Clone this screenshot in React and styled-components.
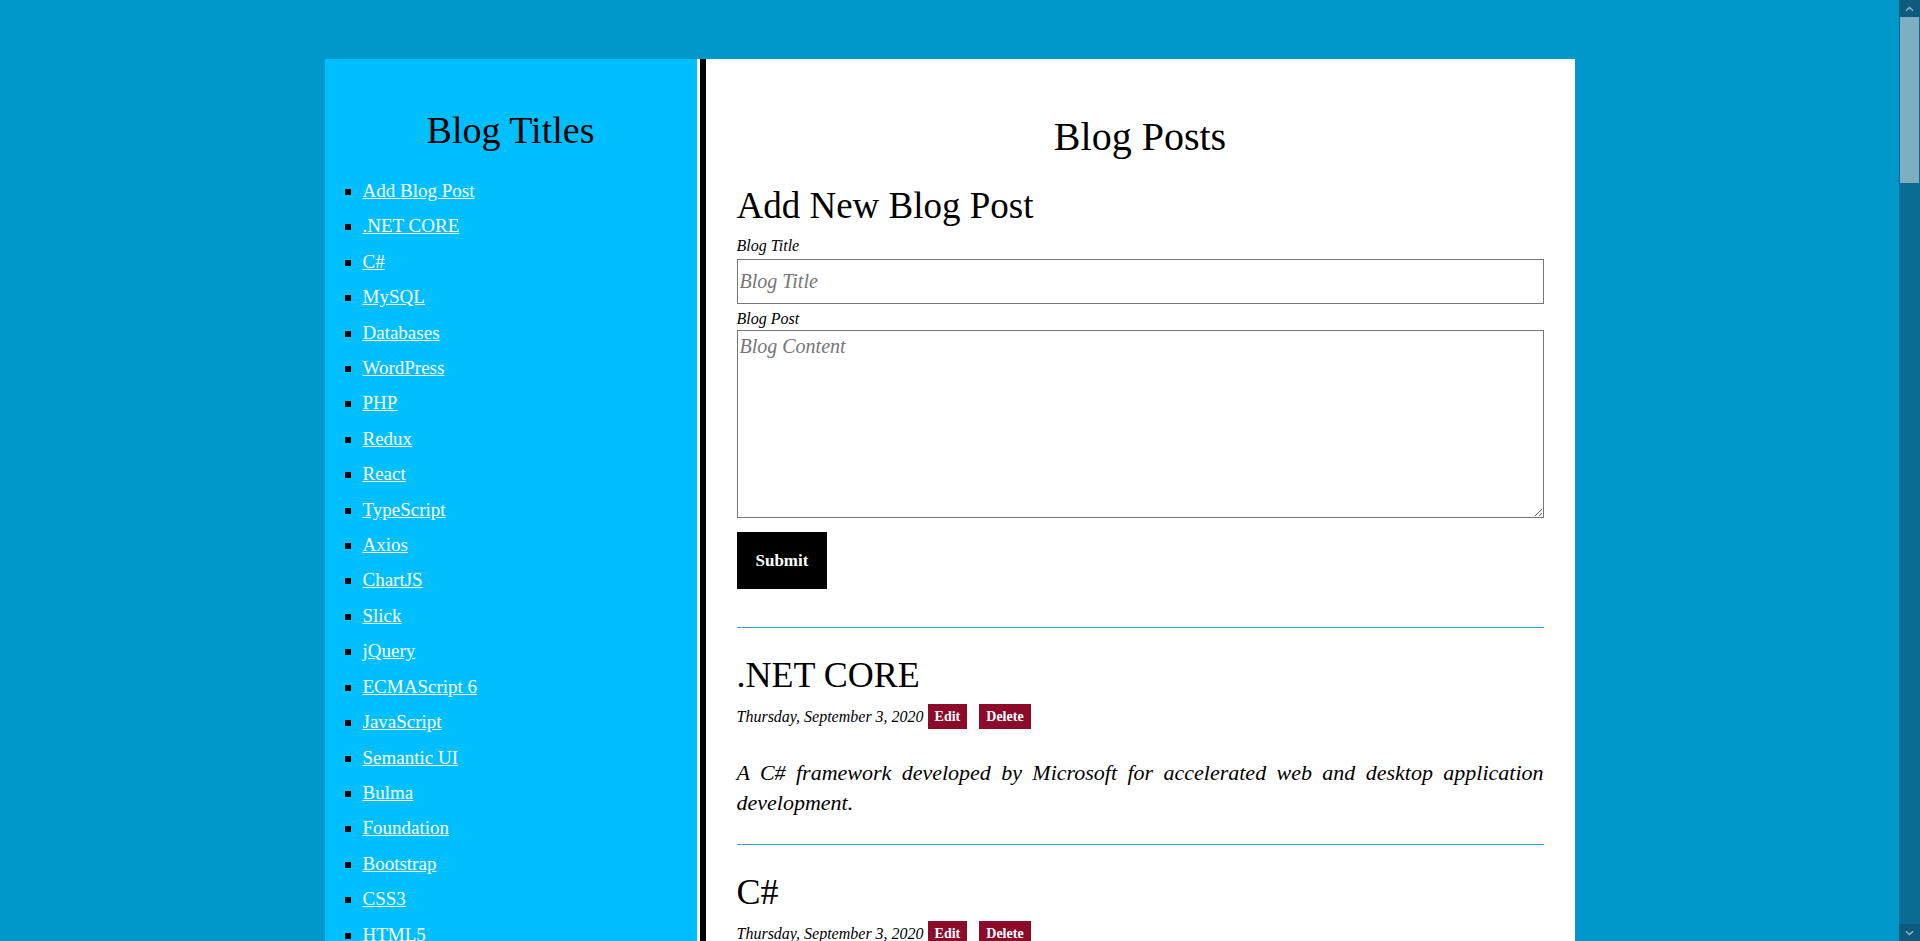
import React from 'react';
import styled, { createGlobalStyle } from 'styled-components';

const GlobalStyle = createGlobalStyle`
  html { background: #0098cb; }
  body {
    margin: 0;
    background: #0098cb;
    font-family: "Liberation Serif", "Times New Roman", serif;
    color: #000;
  }
`;

const Viewport = styled.div`
  padding-right: 21px;
  overflow: hidden;
`;

const Page = styled.div`
  width: 1250px;
  margin: 59px auto;
  display: flex;
  background: #fff;
`;

const Sidebar = styled.aside`
  width: 372px;
  flex: none;
  background: #00bfff;
  padding-top: 49px;
  box-sizing: border-box;
`;

const SideTitle = styled.h1`
  margin: 0;
  font-size: 38px;
  line-height: 44px;
  font-weight: 400;
  text-align: center;
`;

const TitleList = styled.ul`
  margin: 21px 0 0;
  padding: 0 0 0 38px;
  list-style: square;
`;

const TitleItem = styled.li`
  font-size: 19px;
  line-height: 35.4px;
  color: #000;
`;

const TitleLink = styled.a`
  color: #fff;
  text-decoration: underline;
  cursor: pointer;
`;

const Main = styled.main`
  flex: 1;
  margin-left: 3px;
  border-left: 6px solid #000;
  padding: 54.5px 31px 40px;
  min-width: 0;
`;

const PageTitle = styled.h1`
  margin: 0;
  font-size: 40px;
  line-height: 46px;
  font-weight: 400;
  text-align: center;
`;

const FormTitle = styled.h2`
  margin: 24.5px 0 0;
  font-size: 37px;
  line-height: 43px;
  font-weight: 400;
`;

const Form = styled.form`
  display: flex;
  flex-direction: column;
  align-items: flex-start;
`;

const Label = styled.label`
  display: block;
  margin-top: ${p => (p.$first ? '8px' : '4px')};
  font-style: italic;
  font-size: 16px;
  line-height: 22px;
`;

const fieldStyles = `
  display: block;
  width: 100%;
  box-sizing: border-box;
  border: 1px solid #767676;
  background: #fff;
  font-family: "Liberation Serif", "Times New Roman", serif;
  font-style: italic;
  font-size: 20px;
  color: #000;
  padding: 0 2px;
  margin: 0;
  &::placeholder { color: #757575; }
`;

const TextInput = styled.input`
  ${fieldStyles}
  height: 45px;
  margin-top: 2px;
`;

const TextArea = styled.textarea`
  ${fieldStyles}
  height: 188px;
  padding-top: 2px;
  line-height: 26px;
`;

const SubmitButton = styled.button`
  margin-top: 14px;
  height: 57px;
  padding: 0 19px;
  border: none;
  background: #000;
  color: #fff;
  font-family: "Liberation Serif", "Times New Roman", serif;
  font-weight: 700;
  font-size: 17px;
  cursor: pointer;
`;

const PostList = styled.div`
  margin-top: 38px;
`;

const Post = styled.article`
  border-top: 1px solid #2ea3cd;
  padding: 27px 0 26px;
`;

const PostTitle = styled.h3`
  margin: 0;
  font-size: 36px;
  line-height: 40px;
  font-weight: 400;
`;

const PostMeta = styled.div`
  margin-top: 9px;
  height: 25px;
  display: flex;
  align-items: center;
`;

const PostDate = styled.span`
  font-style: italic;
  font-size: 16px;
  margin-right: 4px;
`;

const ActionButton = styled.button`
  height: 25px;
  padding: 0 7px;
  margin-left: ${p => (p.$spaced ? '12px' : '0')};
  border: none;
  background: #8c0b2b;
  color: #fff;
  font-family: "Liberation Serif", "Times New Roman", serif;
  font-weight: 700;
  font-size: 14px;
  cursor: pointer;
`;

const PostBody = styled.p`
  margin: 29px 0 0;
  font-style: italic;
  font-size: 22px;
  line-height: 30px;
  text-align: justify;
`;

/* Window scrollbar, drawn as a fixed overlay on the right edge */
const ScrollBar = styled.div`
  position: fixed;
  top: 0;
  right: 0;
  width: 21px;
  height: 100vh;
  background: #0b6c93;
  display: flex;
  flex-direction: column;
  z-index: 10;
`;

const ScrollArrow = styled.div`
  height: 17px;
  flex: none;
  background: #0c5a7d;
  display: flex;
  align-items: center;
  justify-content: center;
  margin-top: ${p => (p.$down ? 'auto' : '0')};
`;

const ScrollThumb = styled.div`
  height: 166px;
  margin: 0 1px;
  background: #7eaec2;
  flex: none;
`;

const Chevron = ({ down }) => (
  <svg width="9" height="6" viewBox="0 0 9 6">
    <path
      d={down ? 'M1 1.2 L4.5 4.6 L8 1.2' : 'M1 4.8 L4.5 1.4 L8 4.8'}
      fill="none"
      stroke="#8fb8cb"
      strokeWidth="1.4"
    />
  </svg>
);

const titles = [
  'Add Blog Post', '.NET CORE', 'C#', 'MySQL', 'Databases', 'WordPress', 'PHP',
  'Redux', 'React', 'TypeScript', 'Axios', 'ChartJS', 'Slick', 'jQuery',
  'ECMAScript 6', 'JavaScript', 'Semantic UI', 'Bulma', 'Foundation',
  'Bootstrap', 'CSS3', 'HTML5',
];

const posts = [
  ['.NET CORE', 'A C# framework developed by Microsoft for accelerated web and desktop application development.'],
  ['C#', 'A general-purpose, object-oriented programming language developed by Microsoft as part of its .NET initiative.'],
  ['MySQL', 'An open-source relational database management system based on the structured query language.'],
  ['Databases', 'Organized collections of structured information, typically stored electronically in a computer system.'],
  ['WordPress', 'A free and open-source content management system written in PHP and paired with a MySQL database.'],
  ['PHP', 'A popular general-purpose scripting language that is especially suited to server-side web development.'],
  ['Redux', 'A predictable state container for JavaScript applications, most often used together with React.'],
  ['React', 'A JavaScript library for building user interfaces out of small, reusable and composable components.'],
  ['TypeScript', 'A strongly typed programming language that builds on JavaScript and compiles to plain JavaScript.'],
  ['Axios', 'A promise-based HTTP client for the browser and Node.js with a simple and clean interface.'],
  ['ChartJS', 'A simple yet flexible JavaScript charting library for designers and developers using the canvas.'],
  ['Slick', 'A fully responsive carousel plugin for jQuery with swipe support and many configuration options.'],
  ['jQuery', 'A fast, small and feature-rich JavaScript library that makes DOM traversal and manipulation simple.'],
  ['ECMAScript 6', 'The sixth edition of the ECMAScript standard, adding classes, modules, arrow functions and promises.'],
  ['JavaScript', 'A lightweight, interpreted programming language with first-class functions, best known for the web.'],
  ['Semantic UI', 'A development framework that helps create beautiful, responsive layouts using human-friendly HTML.'],
  ['Bulma', 'A free, open-source CSS framework based on Flexbox, with a clean and modular set of components.'],
  ['Foundation', 'A responsive front-end framework providing a grid system and components for any device.'],
  ['Bootstrap', 'The most popular front-end toolkit for developing responsive, mobile-first projects on the web.'],
  ['CSS3', 'The latest evolution of the Cascading Style Sheets language, adding animations, gradients and more.'],
  ['HTML5', 'The fifth major version of the markup language used to structure and present content on the web.'],
];

export default function App() {
  return (
    <>
      <GlobalStyle />
      <Viewport>
        <Page>
          <Sidebar>
            <SideTitle>Blog Titles</SideTitle>
            <TitleList>
              {titles.map(t => (
                <TitleItem key={t}>
                  <TitleLink href="#" onClick={e => e.preventDefault()}>{t}</TitleLink>
                </TitleItem>
              ))}
            </TitleList>
          </Sidebar>
          <Main>
            <PageTitle>Blog Posts</PageTitle>
            <FormTitle>Add New Blog Post</FormTitle>
            <Form onSubmit={e => e.preventDefault()}>
              <Label $first htmlFor="blog-title">Blog Title</Label>
              <TextInput id="blog-title" type="text" placeholder="Blog Title" />
              <Label htmlFor="blog-post">Blog Post</Label>
              <TextArea id="blog-post" placeholder="Blog Content" />
              <SubmitButton type="submit">Submit</SubmitButton>
            </Form>
            <PostList>
              {posts.map(([title, body]) => (
                <Post key={title}>
                  <PostTitle>{title}</PostTitle>
                  <PostMeta>
                    <PostDate>Thursday, September 3, 2020</PostDate>
                    <ActionButton type="button">Edit</ActionButton>
                    <ActionButton type="button" $spaced>Delete</ActionButton>
                  </PostMeta>
                  <PostBody>{body}</PostBody>
                </Post>
              ))}
            </PostList>
          </Main>
        </Page>
      </Viewport>
      <ScrollBar aria-hidden="true">
        <ScrollArrow><Chevron /></ScrollArrow>
        <ScrollThumb />
        <ScrollArrow $down><Chevron down /></ScrollArrow>
      </ScrollBar>
    </>
  );
}
